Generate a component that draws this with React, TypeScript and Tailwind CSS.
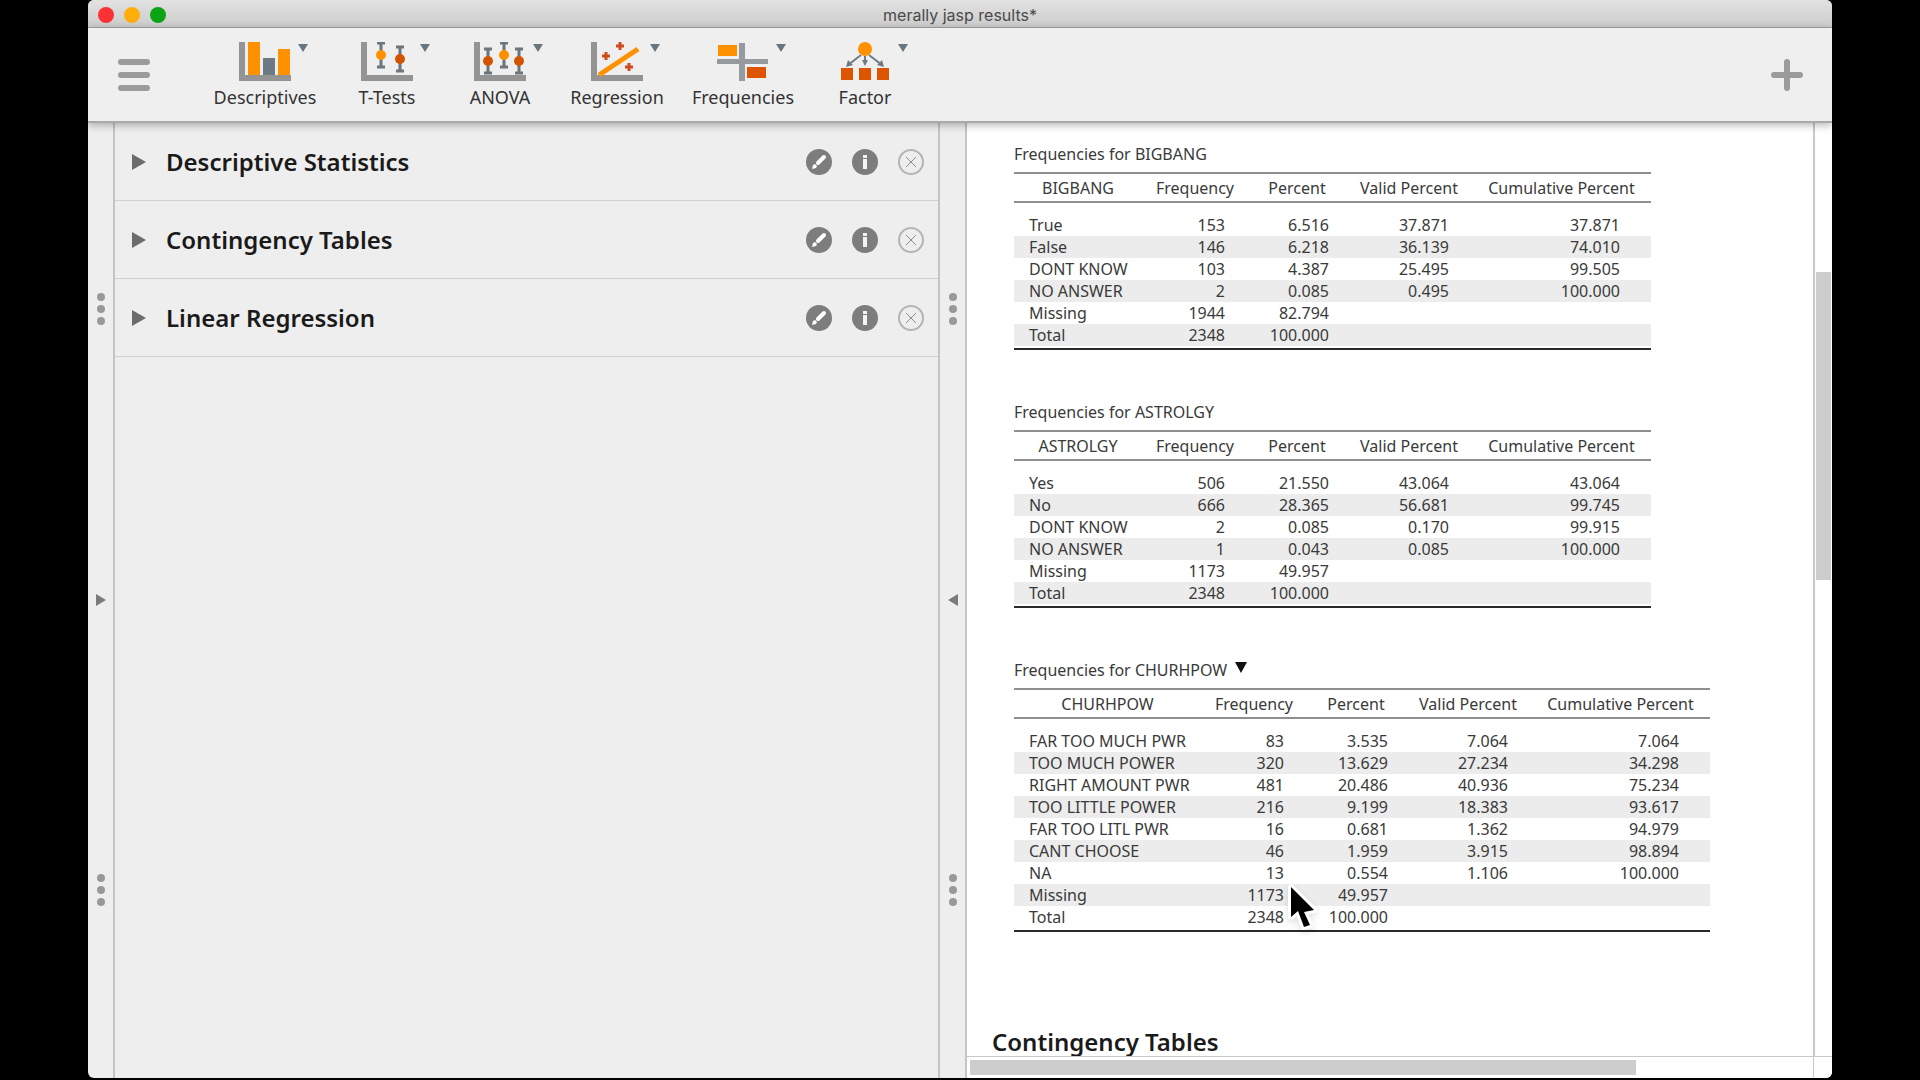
import React from "react";

type Row = [string, string, string, string?, string?];

interface FrequencyData {
    name: string;
    rows: Row[];
    wide?: boolean;
    active?: boolean;
}

const tables: FrequencyData[] = [
    {
        name: "BIGBANG",
        rows: [
            ["True", "153", "6.516", "37.871", "37.871"],
            ["False", "146", "6.218", "36.139", "74.010"],
            ["DONT KNOW", "103", "4.387", "25.495", "99.505"],
            ["NO ANSWER", "2", "0.085", "0.495", "100.000"],
            ["Missing", "1944", "82.794"],
            ["Total", "2348", "100.000"],
        ],
    },
    {
        name: "ASTROLGY",
        rows: [
            ["Yes", "506", "21.550", "43.064", "43.064"],
            ["No", "666", "28.365", "56.681", "99.745"],
            ["DONT KNOW", "2", "0.085", "0.170", "99.915"],
            ["NO ANSWER", "1", "0.043", "0.085", "100.000"],
            ["Missing", "1173", "49.957"],
            ["Total", "2348", "100.000"],
        ],
    },
    {
        name: "CHURHPOW",
        wide: true,
        active: true,
        rows: [
            ["FAR TOO MUCH PWR", "83", "3.535", "7.064", "7.064"],
            ["TOO MUCH POWER", "320", "13.629", "27.234", "34.298"],
            ["RIGHT AMOUNT PWR", "481", "20.486", "40.936", "75.234"],
            ["TOO LITTLE POWER", "216", "9.199", "18.383", "93.617"],
            ["FAR TOO LITL PWR", "16", "0.681", "1.362", "94.979"],
            ["CANT CHOOSE", "46", "1.959", "3.915", "98.894"],
            ["NA", "13", "0.554", "1.106", "100.000"],
            ["Missing", "1173", "49.957"],
            ["Total", "2348", "100.000"],
        ],
    },
];

const Axes = () => <path d="M0 0H6V33H52V39H0Z" fill="#949494" />;

// Error bar with a dot in the middle
function Bar({ x, y, color }: { x: number; y: number; color: string }) {
    return (
        <g>
            <path d={`M${x - 4} ${y - 12}h8M${x} ${y - 12}v24M${x - 4} ${y + 12}h8`} stroke="#6c757b" strokeWidth="3" fill="none" />
            <circle cx={x} cy={y} r="5" fill={color} />
        </g>
    );
}

const menu = [
    {
        label: "Descriptives",
        width: "w-[130px]",
        icon: (
            <>
                <Axes />
                <path d="M9 0H21V33H9ZM39 7H51V33H39Z" fill="#ff9100" />
                <path d="M24 16H36V33H24Z" fill="#6c7a83" />
            </>
        ),
    },
    {
        label: "T-Tests",
        width: "w-[114px]",
        icon: (
            <>
                <Axes />
                <Bar x={20} y={13} color="#ff9100" />
                <Bar x={39} y={17} color="#d35400" />
            </>
        ),
    },
    {
        label: "ANOVA",
        width: "w-[112px]",
        icon: (
            <>
                <Axes />
                <Bar x={14} y={19} color="#d35400" />
                <Bar x={30} y={13} color="#ff9100" />
                <Bar x={45} y={19} color="#d35400" />
            </>
        ),
    },
    {
        label: "Regression",
        width: "w-[122px]",
        icon: (
            <>
                <Axes />
                <path d="M8 33L47 7" stroke="#ff9100" strokeWidth="5" />
                <path d="M11 14h8M15 10v8M25 4h8M29 0v8M34 25h8M38 21v8" stroke="#cf4a1c" strokeWidth="3" />
            </>
        ),
    },
    {
        label: "Frequencies",
        width: "w-[130px]",
        icon: (
            <>
                <path d="M22 1H28V17H51V22H28V39H22V22H0V17H22Z" fill="#949a9e" />
                <path d="M1 3H20V14H1Z" fill="#ff9100" />
                <path d="M30 25H49V36H30Z" fill="#dd5500" />
            </>
        ),
    },
    {
        label: "Factor",
        width: "w-[114px]",
        icon: (
            <>
                <path d="M22 13L9 23M26 14V20M30 13L43 23" stroke="#6c7a83" strokeWidth="2" />
                <path d="M7 25l2-7 5 5zM23 18h6l-3 6zM45 25l-2-7-5 5z" fill="#6c7a83" />
                <circle cx="26" cy="7" r="7" fill="#ff9100" />
                <path d="M2 26H14V38H2ZM20 26H32V38H20ZM38 26H50V38H38Z" fill="#dd5500" />
            </>
        ),
    },
];

function MenuButton({ label, width, icon }: (typeof menu)[number]) {
    return (
        <button className={`relative flex flex-col items-center ${width}`}>
            <svg width="52" height="39" viewBox="0 0 52 39">{icon}</svg>
            <svg className="absolute top-[2px] left-1/2 ml-[33px]" width="10" height="8" viewBox="0 0 10 8">
                <path d="M0 0H10L5 8Z" fill="#68777f" />
            </svg>
            <span className="mt-1 text-[18px] leading-6 text-[#333]">{label}</span>
        </button>
    );
}

function Analysis({ title }: { title: string }) {
    return (
        <div className="flex h-[78px] shrink-0 items-center border-b border-[#cfcfcf] pr-[14px] pl-[17px]">
            <button className="flex items-center gap-5 text-[24px] leading-7 font-semibold text-[#1a1a1a]">
                <svg width="14" height="16" viewBox="0 0 14 16">
                    <path d="M0 0L14 8L0 16Z" fill="#6c6c6c" />
                </svg>
                {title}
            </button>
            <div className="ml-auto flex gap-5">
                <button aria-label={`Edit ${title}`}>
                    <svg width="26" height="26" viewBox="0 0 26 26">
                        <circle cx="13" cy="13" r="13" fill="#7d7d7d" />
                        <path d="M12 14L18 8" stroke="#fff" strokeWidth="4" strokeLinecap="round" />
                        <path d="M6 20L7 16L9 15L11 17L10 19Z" fill="#fff" />
                    </svg>
                </button>
                <button aria-label={`Help for ${title}`}>
                    <svg width="26" height="26" viewBox="0 0 26 26">
                        <circle cx="13" cy="13" r="13" fill="#7d7d7d" />
                        <path d="M11 6H15V9H11ZM11 10H15V20H11Z" fill="#f4f4f4" />
                    </svg>
                </button>
                <button aria-label={`Remove ${title}`}>
                    <svg width="26" height="26" viewBox="0 0 26 26" fill="none">
                        <circle cx="13" cy="13" r="12" stroke="#b4b4b4" strokeWidth="2" />
                        <path d="M8 8L18 18M18 8L8 18" stroke="#8c8c8c" strokeWidth="1" />
                    </svg>
                </button>
            </div>
        </div>
    );
}

const Dots = () => (
    <svg width="8" height="32" viewBox="0 0 8 32" fill="#999">
        <circle cx="4" cy="4" r="4" />
        <circle cx="4" cy="16" r="4" />
        <circle cx="4" cy="28" r="4" />
    </svg>
);

function Splitter({ direction }: { direction: "left" | "right" }) {
    return (
        <div className="flex flex-col items-center justify-between border-r-2 border-[#c4c4c4] pt-[170px] pb-[172px]">
            <Dots />
            <button aria-label={`Move panel ${direction}`}>
                <svg className="block" width="10" height="12" viewBox="0 0 10 12">
                    <path d={direction === "right" ? "M0 0L10 6L0 12Z" : "M10 0L0 6L10 12Z"} fill="#7b7b7b" />
                </svg>
            </button>
            <Dots />
        </div>
    );
}

function FrequencyTable({ name, rows, wide, active }: FrequencyData) {
    return (
        <table className={`mb-12 table-fixed border-b-2 border-[#2a2a2a] text-[16px] leading-[22px] text-[#3a3a3a] ${wide ? "w-[696px]" : "w-[637px]"}`}>
            <caption className="h-8 pt-[3px] text-left">
                <span className="flex items-start gap-2">
                    Frequencies for {name}
                    {active && (
                        <svg className="mt-[3px]" width="12" height="11" viewBox="0 0 12 11">
                            <path d="M0 0H12L6 11Z" fill="#111" />
                        </svg>
                    )}
                </span>
            </caption>
            <colgroup>
                <col />
                <col className="w-[106px]" />
                <col className="w-[98px]" />
                <col className="w-[126px]" />
                <col className="w-[179px]" />
            </colgroup>
            <thead>
                <tr className="h-[29px] border-y-2 border-[#8f8f8f]">
                    {[name, "Frequency", "Percent", "Valid Percent", "Cumulative Percent"].map((h) => (
                        <th key={h} className="p-0 font-normal">{h}</th>
                    ))}
                </tr>
            </thead>
            <tbody>
                <tr className="h-[12px]"><td colSpan={5}></td></tr>
                {rows.map((r) => (
                    <tr key={r[0]} className="odd:bg-[#ececec]">
                        <td className="p-0 pl-[15px]">{r[0]}</td>
                        <td className="p-0 pr-[23px] text-right">{r[1]}</td>
                        <td className="p-0 pr-[17px] text-right">{r[2]}</td>
                        <td className="p-0 pr-[23px] text-right">{r[3]}</td>
                        <td className="p-0 pr-[31px] text-right">{r[4]}</td>
                    </tr>
                ))}
                <tr className="h-[3px]"><td colSpan={5}></td></tr>
            </tbody>
        </table>
    );
}

export default function App() {
    return (
        <div className="flex h-screen flex-col overflow-hidden bg-black px-[88px] pb-[2px] font-['Noto_Sans','Open_Sans',sans-serif]">
            <div className="relative flex min-h-0 flex-1 flex-col overflow-hidden rounded-md bg-[#eeeeee]">
                {/* Title bar */}
                <header className="grid h-7 shrink-0 grid-cols-3 items-center border-b border-[#a4a4a4] bg-linear-to-b from-[#e2e2e2] to-[#cccccc] px-[10px] pt-[2px]">
                    <div className="flex gap-[10px]">
                        <button aria-label="Close" className="size-4 rounded-full bg-[#fc3136]" />
                        <button aria-label="Minimize" className="size-4 rounded-full bg-[#ffae0c]" />
                        <button aria-label="Zoom" className="size-4 rounded-full bg-[#0ba514]" />
                    </div>
                    <h1 className="text-center font-['Inter',sans-serif] text-[16px] leading-5 text-[#4a4a4a]">merally jasp results*</h1>
                </header>

                {/* Ribbon */}
                <nav className="relative z-10 flex h-[95px] shrink-0 items-start border-b-2 border-[#a9a9a9] bg-[#efefef] pt-[14px] pr-[29px] pl-[30px] shadow-[0_2px_8px_rgba(0,0,0,0.3)]">
                    <button aria-label="Menu" className="mt-[17px] mr-[50px]">
                        <svg width="32" height="32" viewBox="0 0 32 32" stroke="#9b9b9b" strokeWidth="6" strokeLinecap="round">
                            <path d="M3 3H29M3 16H29M3 29H29" />
                        </svg>
                    </button>
                    {menu.map((m) => (
                        <MenuButton key={m.label} {...m} />
                    ))}
                    <button aria-label="Add module" className="mt-[17px] ml-auto">
                        <svg width="32" height="32" viewBox="0 0 32 32" stroke="#9b9b9b" strokeWidth="6" strokeLinecap="round">
                            <path d="M3 16H29M16 3V29" />
                        </svg>
                    </button>
                </nav>

                <div className="grid min-h-0 flex-1 grid-cols-[27px_825fr_27px_865fr]">
                    <Splitter direction="right" />
                    <main className="flex flex-col border-r-2 border-[#c4c4c4]">
                        <Analysis title="Descriptive Statistics" />
                        <Analysis title="Contingency Tables" />
                        <Analysis title="Linear Regression" />
                    </main>
                    <Splitter direction="left" />

                    {/* Results */}
                    <section className="grid min-h-0 grid-cols-[1fr_19px] grid-rows-[1fr_22px] bg-white">
                        <div className="min-h-0 overflow-hidden pt-[17px] pl-[47px]">
                            {tables.map((t) => (
                                <FrequencyTable key={t.name} {...t} />
                            ))}
                            <h2 className="mt-[98px] -ml-[22px] text-[24px] leading-6 font-semibold text-[#1a1a1a]">Contingency Tables</h2>
                        </div>
                        <div className="flex flex-col border-l-2 border-[#c8c8c8] px-px">
                            <div className="grow-[149]" />
                            <div className="grow-[308] bg-[#cdcdcd]" />
                            <div className="grow-[476]" />
                        </div>
                        <div className="flex border-t border-[#c8c8c8] py-[3px] pl-[3px]">
                            <div className="w-[79%] bg-[#cdcdcd]" />
                        </div>
                        <div className="border-t border-l border-[#c8c8c8]" />
                    </section>
                </div>

                {/* Mouse pointer */}
                <svg className="pointer-events-none absolute top-[881px] left-[1199px] drop-shadow-md" width="36" height="56" viewBox="0 0 36 56">
                    <path
                        d="M4 6V36L11 30L17 46L23 44L17 31L27 29Z"
                        fill="#000"
                        stroke="#fff"
                        strokeWidth="6"
                        strokeLinejoin="round"
                        style={{ paintOrder: "stroke" }}
                    />
                </svg>
            </div>
        </div>
    );
}
